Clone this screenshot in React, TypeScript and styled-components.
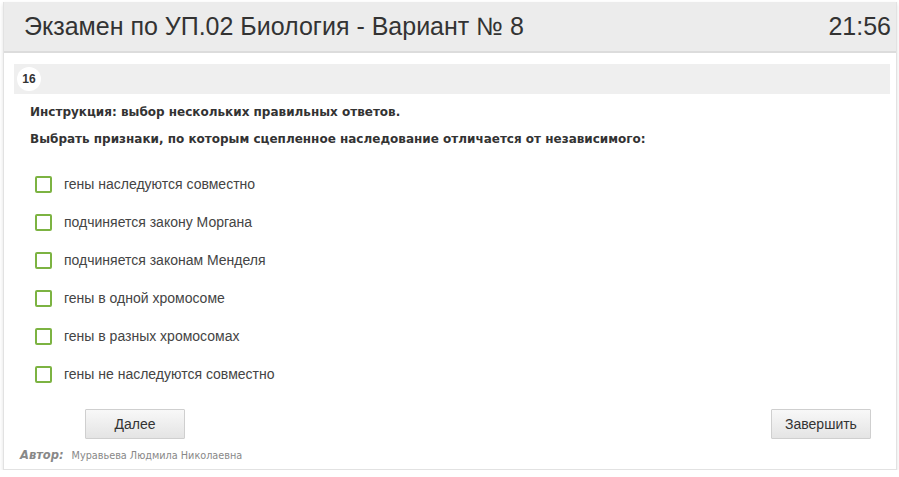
import React from "react";
import styled, { createGlobalStyle } from "styled-components";

const Global = createGlobalStyle`
  html, body { margin: 0; padding: 0; background: #ffffff; }
  body { font-family: "Liberation Sans", Arial, sans-serif; }
`;

const Panel = styled.div`
  margin: 2px 2px 0 3px;
  width: 894px;
  height: 468px;
  box-sizing: border-box;
  border: 1px solid #e2e2e2;
  border-top: none;
  box-shadow: 0 2px 4px rgba(0, 0, 0, 0.12);
  display: flex;
  flex-direction: column;
  background: #fff;
`;

const Header = styled.div`
  height: 51px;
  background: #ececec;
  border-bottom: 2px solid #dcdcdc;
  box-sizing: border-box;
  display: flex;
  align-items: center;
  justify-content: space-between;
  padding: 0 5px 0 20px;
  color: #333;
  font-size: 25px;
`;

const Body = styled.div`
  padding: 11px 6px 0 10px;
  display: flex;
  flex-direction: column;
  flex: 1;
`;

const NumberBar = styled.div`
  height: 30px;
  background: #efefef;
  display: flex;
  align-items: center;
  padding-left: 3px;
`;

const NumberBadge = styled.div`
  width: 24px;
  height: 24px;
  border-radius: 50%;
  background: #fff;
  display: flex;
  align-items: center;
  justify-content: center;
  font-weight: bold;
  font-size: 12px;
  color: #333;
`;

const Instruction = styled.div<{ $top: number }>`
  font-family: "DejaVu Sans", Tahoma, sans-serif;
  font-weight: bold;
  font-size: 12px;
  color: #333;
  padding-left: 16px;
  line-height: 16px;
  margin-top: ${(p) => p.$top}px;
`;

const Options = styled.div`
  display: flex;
  flex-direction: column;
  gap: 20px;
  margin-top: 28px;
  padding-left: 21px;
`;

const Option = styled.label`
  display: flex;
  align-items: center;
  gap: 12px;
  height: 18px;
  font-size: 14px;
  color: #444;
`;

const Box = styled.span`
  width: 17px;
  height: 17px;
  box-sizing: border-box;
  border: 2px solid #7cb342;
  border-radius: 2px;
  background: #fff;
`;

const Buttons = styled.div`
  display: flex;
  justify-content: space-between;
  margin-top: 26px;
  padding: 0 19px 0 71px;
`;

const Button = styled.button`
  width: 100px;
  height: 30px;
  border: 1px solid #cfcfcf;
  border-radius: 1px;
  background: linear-gradient(#f8f8f8, #e4e4e4);
  font-family: "Liberation Sans", Arial, sans-serif;
  font-size: 14px;
  color: #333;
  padding: 0;
`;

const Author = styled.div`
  margin-top: 9px;
  padding-left: 6px;
  display: flex;
  align-items: baseline;
  gap: 8px;
  color: #888;
`;

const AuthorLabel = styled.span`
  font-family: "DejaVu Sans", Tahoma, sans-serif;
  font-style: italic;
  font-weight: bold;
  font-size: 11.5px;
`;

const AuthorName = styled.span`
  font-family: "DejaVu Sans", Tahoma, sans-serif;
  font-size: 9.7px;
`;

const answers = [
  "гены наследуются совместно",
  "подчиняется закону Моргана",
  "подчиняется законам Менделя",
  "гены в одной хромосоме",
  "гены в разных хромосомах",
  "гены не наследуются совместно",
];

export default function App() {
  return (
    <>
      <Global />
      <Panel>
        <Header>
          <span>Экзамен по УП.02 Биология - Вариант № 8</span>
          <span>21:56</span>
        </Header>
        <Body>
          <NumberBar>
            <NumberBadge>16</NumberBadge>
          </NumberBar>
          <Instruction $top={10}>Инструкция: выбор нескольких правильных ответов.</Instruction>
          <Instruction $top={11}>
            Выбрать признаки, по которым сцепленное наследование отличается от независимого:
          </Instruction>
          <Options>
            {answers.map((a) => (
              <Option key={a}>
                <Box />
                <span>{a}</span>
              </Option>
            ))}
          </Options>
          <Buttons>
            <Button>Далее</Button>
            <Button>Завершить</Button>
          </Buttons>
          <Author>
            <AuthorLabel>Автор:</AuthorLabel>
            <AuthorName>Муравьева Людмила Николаевна</AuthorName>
          </Author>
        </Body>
      </Panel>
    </>
  );
}
